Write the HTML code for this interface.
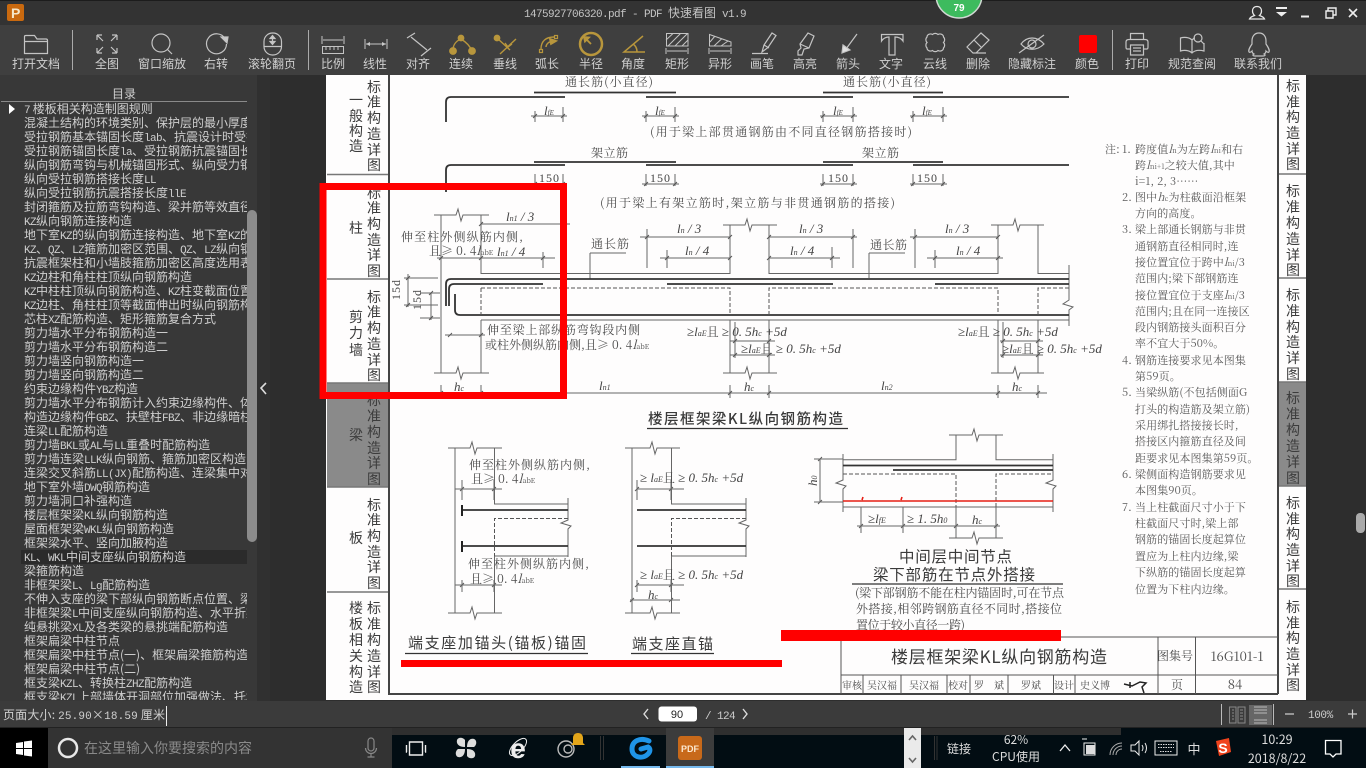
<!DOCTYPE html>
<html lang="zh"><head><meta charset="utf-8"><title>PDF 快速看图</title>
<style>
*{margin:0;padding:0;box-sizing:border-box}
html,body{width:1366px;height:768px;overflow:hidden;background:#2d2d2d;font-family:"Liberation Sans","WenQuanYi Zen Hei",sans-serif}
.a{position:absolute}
#title{left:0;top:0;width:1366px;height:25px;background:#333;border-top:1px solid #1c1c1c}
#tools{left:0;top:25px;width:1366px;height:50px;background:#3f3f3f}
#side{left:0;top:75px;width:257px;height:626px;background:#383838}
#strip{left:257px;top:75px;width:13px;height:626px;background:#303030}
#thumb{left:247px;top:210px;width:10px;height:332px;background:#8c8c8c;border-radius:5px}
#list{left:0;top:102px;width:247px;height:598px;overflow:hidden;color:#cfcfcf;font:12px/14px "WenQuanYi Zen Hei","Noto Sans CJK SC",sans-serif;white-space:nowrap}
#list div{padding-left:24px;height:14px}
#list b{font:11px/14px "Liberation Mono",monospace;letter-spacing:-.6px}
#list .s{background:#2b2b2b;margin-left:21px;padding-left:3px}
#page{left:326px;top:75px;width:980px;height:625px;background:#fefdfd}
#status{left:0;top:701px;width:1366px;height:27px;background:#3b3b3b;border-bottom:1px solid #222}
#task{left:0;top:728px;width:1366px;height:40px;background:#020d13}
</style></head><body>
<div class="a" id="title"></div>
<div class="a" id="tools"></div>
<div class="a" id="side"></div>
<div class="a" id="strip"></div>
<div class="a" id="page"></div>
<div class="a" id="list">
<div style="padding-left:24px"><b>7</b>&nbsp;楼板相关构造制图规则</div>
<div>混凝土结构的环境类别、保护层的最小厚度</div>
<div>受拉钢筋基本锚固长度<b>lab</b>、抗震设计时受拉钢筋</div>
<div>受拉钢筋锚固长度<b>la</b>、受拉钢筋抗震锚固长度</div>
<div>纵向钢筋弯钩与机械锚固形式、纵向受力钢筋</div>
<div>纵向受拉钢筋搭接长度<b>LL</b></div>
<div>纵向受拉钢筋抗震搭接长度<b>llE</b></div>
<div>封闭箍筋及拉筋弯钩构造、梁并筋等效直径</div>
<div><b>KZ</b>纵向钢筋连接构造</div>
<div>地下室<b>KZ</b>的纵向钢筋连接构造、地下室<b>KZ</b>的</div>
<div><b>KZ</b>、<b>QZ</b>、<b>LZ</b>箍筋加密区范围、<b>QZ</b>、<b>LZ</b>纵向钢筋</div>
<div>抗震框架柱和小墙肢箍筋加密区高度选用表</div>
<div><b>KZ</b>边柱和角柱柱顶纵向钢筋构造</div>
<div><b>KZ</b>中柱柱顶纵向钢筋构造、<b>KZ</b>柱变截面位置</div>
<div><b>KZ</b>边柱、角柱柱顶等截面伸出时纵向钢筋构造</div>
<div>芯柱<b>XZ</b>配筋构造、矩形箍筋复合方式</div>
<div>剪力墙水平分布钢筋构造一</div>
<div>剪力墙水平分布钢筋构造二</div>
<div>剪力墙竖向钢筋构造一</div>
<div>剪力墙竖向钢筋构造二</div>
<div>约束边缘构件<b>YBZ</b>构造</div>
<div>剪力墙水平分布钢筋计入约束边缘构件、体积</div>
<div>构造边缘构件<b>GBZ</b>、扶壁柱<b>FBZ</b>、非边缘暗柱</div>
<div>连梁<b>LL</b>配筋构造</div>
<div>剪力墙<b>BKL</b>或<b>AL</b>与<b>LL</b>重叠时配筋构造</div>
<div>剪力墙连梁<b>LLK</b>纵向钢筋、箍筋加密区构造</div>
<div>连梁交叉斜筋<b>LL(JX)</b>配筋构造、连梁集中对角</div>
<div>地下室外墙<b>DWQ</b>钢筋构造</div>
<div>剪力墙洞口补强构造</div>
<div>楼层框架梁<b>KL</b>纵向钢筋构造</div>
<div>屋面框架梁<b>WKL</b>纵向钢筋构造</div>
<div>框架梁水平、竖向加腋构造</div>
<div class="s"><b>KL</b>、<b>WKL</b>中间支座纵向钢筋构造</div>
<div>梁箍筋构造</div>
<div>非框架梁<b>L</b>、<b>Lg</b>配筋构造</div>
<div>不伸入支座的梁下部纵向钢筋断点位置、梁</div>
<div>非框架梁<b>L</b>中间支座纵向钢筋构造、水平折梁</div>
<div>纯悬挑梁<b>XL</b>及各类梁的悬挑端配筋构造</div>
<div>框架扁梁中柱节点</div>
<div>框架扁梁中柱节点(一)、框架扁梁箍筋构造</div>
<div>框架扁梁中柱节点(二)</div>
<div>框支梁<b>KZL</b>、转换柱<b>ZHZ</b>配筋构造</div>
<div>框支梁<b>KZL</b>上部墙体开洞部位加强做法、托墙</div>
</div>
<div class="a" id="thumb"></div>
<div class="a" id="status"></div>
<div class="a" id="task"></div>

<!-- Document -->
<svg class="a" style="left:0;top:0" width="1366" height="768" viewBox="0 0 1366 768">
<style>
.t{font-family:"Noto Serif CJK SC","Liberation Serif",serif;font-size:12px;fill:#4c4c4c;font-style:normal}
.h{font-family:"Noto Sans CJK SC","Liberation Sans",sans-serif;fill:#3a3a3a}
.n{font-family:"Noto Serif CJK SC","Liberation Serif",serif;font-size:11px;fill:#5a5a5a;letter-spacing:.1px}
.n .v{font-style:italic}
.n .s{font-size:7px}
.m{font-family:"Liberation Serif",serif;font-size:12px;fill:#444;letter-spacing:1px}
.i{font-family:"Liberation Serif",serif;font-style:italic;font-size:13px;fill:#444}
.l{fill:none;stroke:#666;stroke-width:1}
.b{fill:none;stroke:#333;stroke-width:1.8}
.d{fill:none;stroke:#555;stroke-width:1;stroke-dasharray:4 2}
.c{font-family:"Noto Sans CJK SC",sans-serif;font-size:14px;fill:#3c3c3c;text-anchor:middle}
</style>
<g style="filter:blur(.35px)">
<!-- left tabs -->
<rect x="327" y="383" width="61" height="104" fill="#8a8a8a"/>
<rect x="1279" y="382" width="27" height="104" fill="#8a8a8a"/>
<path d="M327 174.500H388M327 279H388M327 383H388M327 487H388M327 592H388M1279 174H1306M1279 278H1306M1279 382H1306M1279 486H1306M1279 589H1306" stroke="#777" stroke-width="1.500"/>
<path d="M389 75V694H1278M1278 75V694" fill="none" stroke="#444" stroke-width="2"/>
<g class="c">
<text x="374" y="92">标</text><text x="374" y="107">准</text><text x="374" y="123">构</text><text x="374" y="139">造</text><text x="374" y="155">详</text><text x="374" y="170">图</text>
<text x="356" y="105">一</text><text x="356" y="121">般</text><text x="356" y="136">构</text><text x="356" y="151">造</text>
<text x="374" y="198">标</text><text x="374" y="213">准</text><text x="374" y="229">构</text><text x="374" y="245">造</text><text x="374" y="260">详</text><text x="374" y="276">图</text>
<text x="356" y="233">柱</text>
<text x="374" y="302">标</text><text x="374" y="317">准</text><text x="374" y="333">构</text><text x="374" y="349">造</text><text x="374" y="365">详</text><text x="374" y="380">图</text>
<text x="356" y="322">剪</text><text x="356" y="338">力</text><text x="356" y="355">墙</text>
<text x="374" y="405">标</text><text x="374" y="421">准</text><text x="374" y="437">构</text><text x="374" y="453">造</text><text x="374" y="468">详</text><text x="374" y="484">图</text>
<text x="356" y="440">梁</text>
<text x="374" y="510">标</text><text x="374" y="525">准</text><text x="374" y="541">构</text><text x="374" y="557">造</text><text x="374" y="572">详</text><text x="374" y="588">图</text>
<text x="356" y="543">板</text>
<text x="374" y="613">标</text><text x="374" y="629">准</text><text x="374" y="645">构</text><text x="374" y="661">造</text><text x="374" y="677">详</text><text x="374" y="692">图</text>
<text x="356" y="613">楼</text><text x="356" y="629">板</text><text x="356" y="645">相</text><text x="356" y="661">关</text><text x="356" y="677">构</text><text x="356" y="692">造</text>
<text x="1293" y="91">标</text><text x="1293" y="107">准</text><text x="1293" y="122">构</text><text x="1293" y="138">造</text><text x="1293" y="154">详</text><text x="1293" y="169">图</text>
<text x="1293" y="196">标</text><text x="1293" y="212">准</text><text x="1293" y="228">构</text><text x="1293" y="244">造</text><text x="1293" y="260">详</text><text x="1293" y="275">图</text>
<text x="1293" y="300">标</text><text x="1293" y="316">准</text><text x="1293" y="332">构</text><text x="1293" y="347">造</text><text x="1293" y="363">详</text><text x="1293" y="379">图</text>
<text x="1293" y="403">标</text><text x="1293" y="419">准</text><text x="1293" y="435">构</text><text x="1293" y="451">造</text><text x="1293" y="467">详</text><text x="1293" y="483">图</text>
<text x="1293" y="508">标</text><text x="1293" y="524">准</text><text x="1293" y="539">构</text><text x="1293" y="555">造</text><text x="1293" y="571">详</text><text x="1293" y="586">图</text>
<text x="1293" y="612">标</text><text x="1293" y="628">准</text><text x="1293" y="643">构</text><text x="1293" y="659">造</text><text x="1293" y="675">详</text><text x="1293" y="690">图</text>
</g>

<!-- top rows -->
<text class="t" x="565" y="86" textLength="88">通长筋(小直径)</text>
<text class="t" x="843" y="86" textLength="88">通长筋(小直径)</text>
<path class="b" d="M534 92.500H676M823 92.500H943M446 122V102Q446 97 451 97H565M646 97H853M913 97H1069M534 162H676M823 162H943M446 192V170Q446 165 451 165H565M646 165H853M913 165H1069"/>
<path class="l" d="M535 111V122M563 107V122M646 111V122M675 107V122M823 111V122M853 107V122M913 111V122M943 107V122M531 116H567M642 116H679M820 116H857M910 116H947M535 174V186M563 174V186M646 174V186M675 174V186M823 174V186M853 174V186M913 174V186M943 174V186M531 184H567M642 184H679M820 184H857M910 184H947"/>
<g class="i" font-size="12"><text x="544" y="115">l<tspan font-size="7">fE</tspan></text><text x="655" y="115">l<tspan font-size="7">fE</tspan></text><text x="833" y="115">l<tspan font-size="7">fE</tspan></text><text x="922" y="115">l<tspan font-size="7">fE</tspan></text></g>
<text class="t" x="650" y="136" textLength="262">(用于梁上部贯通钢筋由不同直径钢筋搭接时)</text>
<text class="t" x="591" y="157" textLength="37">架立筋</text>
<text class="t" x="862" y="157" textLength="37">架立筋</text>
<g class="m"><text x="539" y="182">150</text><text x="650" y="182">150</text><text x="828" y="182">150</text><text x="917" y="182">150</text></g>
<text class="t" x="600" y="207" textLength="295">(用于梁上有架立筋时,架立筋与非贯通钢筋的搭接)</text>

<!-- elevation -->
<path class="l" d="M434 215H456l2 -6l3 12l2 -6H489M441 215V373M481 215V273.500H730V225M723 225H745l2 -6l3 12l2 -6H777M769 225V273.500H998V225M991 225H1013l2 -6l3 12l2 -6H1044M1038 225V273.500H1069M1069 265V300l-6 4l10 3l-4 3V326M481 320H1069M481 320V373M730 320V373M769 320V373M998 320V373M1038 320V373M434 373H456l2 -6l3 12l2 -6H489M723 373H745l2 -6l3 12l2 -6H777M991 373H1013l2 -6l3 12l2 -6H1044M481 224H570M437 258H555M481 224V262M543 252V268M441 258V262M640 237H730M660 258H730M647 229V268M667 250V268M769 237H857M769 258H840M853 229V268M832 247V268M910 237H998M927 258H1003M915 229V268M935 250V268M590 253H626M590 253V279M869 253H905M869 253V278M404 278H438M404 305H438M408 274V307M420 293H440M420 318H440M431 293V320M445 335H485M441 393H1047M730 385V398M769 385V398M998 385V398M1038 385V398M441 385V398M481 385V398M730 341H775M730 355H775M1000 341H1043M1000 355H1043M735 322V358M1003 322V358"/>
<path class="b" d="M446 306V284Q446 279 451 279H1069M449 306V289Q449 284 454 284H543M667 284H833M935 284H1069M455 294V310Q455 315 460 315H1069" stroke-width="1.600"/>
<path class="d" d="M481 288H730V315M769 315V288H998V315M1038 315V288H1069M481 288V315"/>
<!-- dimension ticks -->
<path fill="none" stroke="#555" stroke-width=".9" d="M533 118l4-4M561 118l4-4M644 118l4-4M673 118l4-4M821 118l4-4M851 118l4-4M911 118l4-4M941 118l4-4M533 186l4-4M561 186l4-4M644 186l4-4M673 186l4-4M821 186l4-4M851 186l4-4M911 186l4-4M941 186l4-4M479 226l4-4M439 260l4-4M479 260l4-4M541 260l4-4M645 239l4-4M728 239l4-4M767 239l4-4M851 239l4-4M913 239l4-4M996 239l4-4M665 260l4-4M728 260l4-4M767 260l4-4M830 260l4-4M933 260l4-4M996 260l4-4M448 337l4-4M479 337l4-4M439 395l4-4M479 395l4-4M728 395l4-4M767 395l4-4M996 395l4-4M1036 395l4-4M733 343l4-4M767 343l4-4M1001 343l4-4M1036 343l4-4M733 357l4-4M767 357l4-4M1001 357l4-4M1036 357l4-4M406 280l4-4M406 307l4-4M429 295l4-4M429 320l4-4M460 491l4-4M492 491l4-4M460 587l4-4M492 587l4-4M635 491l4-4M669 491l4-4M635 587l4-4M669 587l4-4M630 602l4-4M669 602l4-4M859 528l4-4M901 528l4-4M954 528l4-4M994 528l4-4M818 461l4-4M818 504l4-4"/>
<g class="i"><text x="506" y="221">l<tspan font-size="8">n1</tspan> / 3</text><text x="677" y="233">l<tspan font-size="8">n</tspan> / 3</text><text x="685" y="255">l<tspan font-size="8">n</tspan> / 4</text><text x="799" y="233">l<tspan font-size="8">n</tspan> / 3</text><text x="790" y="255">l<tspan font-size="8">n</tspan> / 4</text><text x="945" y="233">l<tspan font-size="8">n</tspan> / 3</text><text x="956" y="255">l<tspan font-size="8">n</tspan> / 4</text><text x="497" y="256">l<tspan font-size="8">n1</tspan> / 4</text><text x="454" y="391">h<tspan font-size="8">c</tspan></text><text x="599" y="390">l<tspan font-size="8">n1</tspan></text><text x="744" y="391">h<tspan font-size="8">c</tspan></text><text x="881" y="390">l<tspan font-size="8">n2</tspan></text><text x="1012" y="391">h<tspan font-size="8">c</tspan></text></g>
<text class="t" x="401" y="241" textLength="122">伸至柱外侧纵筋内侧,</text>
<text class="t" x="429" y="255" font-size="11">且≥ 0. 4<tspan font-style="italic">l</tspan><tspan font-size="7">abE</tspan></text>
<text class="t" x="591" y="248" textLength="38">通长筋</text>
<text class="t" x="870" y="249" textLength="37">通长筋</text>
<text class="m" transform="translate(400 300) rotate(-90)" font-size="11">15d</text>
<text class="m" transform="translate(421 310) rotate(-90)" font-size="11">15d</text>
<text class="t" x="487" y="334" textLength="153">伸至梁上部纵筋弯钩段内侧</text>
<text class="t" x="485" y="349">或柱外侧纵筋内侧,且≥ 0. 4<tspan font-style="italic">l</tspan><tspan font-size="7">abE</tspan></text>
<g class="i" font-size="14">
<text x="687" y="336">≥l<tspan font-size="8">aE</tspan><tspan class="t">且</tspan> ≥ 0. 5h<tspan font-size="8">c</tspan> +5d</text>
<text x="741" y="353">≥l<tspan font-size="8">aE</tspan><tspan class="t">且</tspan> ≥ 0. 5h<tspan font-size="8">c</tspan> +5d</text>
<text x="958" y="336">≥l<tspan font-size="8">aE</tspan><tspan class="t">且</tspan> ≥ 0. 5h<tspan font-size="8">c</tspan> +5d</text>
<text x="1002" y="353">≥l<tspan font-size="8">aE</tspan><tspan class="t">且</tspan> ≥ 0. 5h<tspan font-size="8">c</tspan> +5d</text>
</g>
<text class="h" x="648" y="424" font-size="14.500" font-weight="500" textLength="195">楼层框架梁KL纵向钢筋构造</text>
<path d="M647 428.500H848" stroke="#333" stroke-width="1.200"/>

<!-- lower left -->
<path class="l" d="M448 448H470l2 -6l3 12l2 -6H502M455 448V613M494.500 448V504H568M568 498V520l-7 3l10 3l-3 3V557M494.500 556H568M494.500 556V613M448 613H470l2 -6l3 12l2 -6H502M455 489H502M462 480V500M494 480V500M455 585H502M462 580V592M494 580V592M625 448H650l2 -6l3 12l2 -6H680M632 448V613M671.500 448V504H746M746 498V520l-7 3l10 3l-3 3V557M671.500 556H746M671.500 556V613M625 613H650l2 -6l3 12l2 -6H680M637 489H684M637 480V500M671 480V500M637 585H684M637 580V592M671 580V592M630 600H680"/>
<path class="b" d="M462 510H568M462 546H568M637 510H746M637 546H746"/>
<path d="M462 505V516M462 541V552" stroke="#222" stroke-width="2"/>
<path class="d" d="M568 518.500H494.500V556M746 518.500H671.500V556"/>
<text class="t" x="469" y="469" textLength="121">伸至柱外侧纵筋内侧,</text>
<text class="t" x="471" y="483" font-size="11">且≥ 0. 4<tspan font-style="italic">l</tspan><tspan font-size="7">abE</tspan></text>
<text class="t" x="468" y="568" textLength="121">伸至柱外侧纵筋内侧,</text>
<text class="t" x="470" y="583" font-size="11">且≥ 0. 4<tspan font-style="italic">l</tspan><tspan font-size="7">abE</tspan></text>
<g class="i"><text x="640" y="482">≥ l<tspan font-size="8">aE</tspan><tspan class="t">且</tspan> ≥ 0. 5h<tspan font-size="8">c</tspan> +5d</text><text x="640" y="579">≥ l<tspan font-size="8">aE</tspan><tspan class="t">且</tspan> ≥ 0. 5h<tspan font-size="8">c</tspan> +5d</text><text x="648" y="599">h<tspan font-size="8">c</tspan></text></g>
<text class="h" x="408" y="648" font-size="15" textLength="178">端支座加锚头(锚板)锚固</text>
<text class="h" x="632" y="649" font-size="15" textLength="81">端支座直锚</text>
<path d="M405 653.500H588M631 653.500H714" stroke="#333" stroke-width="1.200"/>

<!-- lower right -->
<path class="l" d="M949 435H972l2 -6l3 12l2 -6H1003M956 435V459.700H843M996 435V459.700H1053M843 454V480l-7 3l10 3l-3 3V512M1053 454V480l-7 3l10 3l-3 3V512M843 507H1053M956 507V538M996 507V538M949 538H972l2 -6l3 12l2 -6H1003M820 459V502M814 459H843M814 502H843M861 507V533M903 507V533M857 526H1000"/>
<path class="b" d="M843 465.500H1053M893 470H1053"/>
<path class="d" d="M843 474H956V507M996 507V474H1053"/>
<path d="M843 501H1053M862 500l1 -3M901 500l1 -3" stroke="#e61e14" stroke-width="1.600" fill="none"/>
<text class="i" transform="translate(817 486) rotate(-90)">h<tspan font-size="8">0</tspan></text>
<g class="i"><text x="868" y="523">≥l<tspan font-size="8">fE</tspan></text><text x="907" y="523">≥ 1. 5h<tspan font-size="8">0</tspan></text><text x="972" y="524">h<tspan font-size="8">c</tspan></text></g>
<text class="h" x="899" y="562" font-size="15.500" textLength="113">中间层中间节点</text>
<text class="h" x="873" y="580" font-size="15.500" textLength="162">梁下部筋在节点外搭接</text>
<path d="M852 584H1063" stroke="#333" stroke-width="1.200"/>
<text class="t" x="855" y="597" font-size="11" textLength="209">(梁下部钢筋不能在柱内锚固时,可在节点</text>
<text class="t" x="856" y="613" font-size="11" textLength="206">外搭接,相邻跨钢筋直径不同时,搭接位</text>
<text class="t" x="856" y="629" font-size="11" textLength="109">置位于较小直径一跨)</text>

<!-- notes -->
<g class="n">
<text y="153"><tspan x="1105">注:</tspan><tspan x="1122">1.</tspan><tspan x="1135">跨度值</tspan><tspan class="v">l</tspan><tspan class="s">n</tspan>为左跨<tspan class="v">l</tspan><tspan class="s">ni</tspan>和右</text>
<text x="1135" y="169">跨<tspan class="v">l</tspan><tspan class="s">ni+1</tspan>之较大值,其中</text>
<text x="1135" y="185">i=1, 2, 3……</text>
<text y="201"><tspan x="1122">2.</tspan><tspan x="1135">图中</tspan><tspan class="v">h</tspan><tspan class="s">c</tspan>为柱截面沿框架</text>
<text x="1135" y="217">方向的高度。</text>
<text y="233"><tspan x="1122">3.</tspan><tspan x="1135">梁上部通长钢筋与非贯</tspan></text>
<text x="1135" y="250">通钢筋直径相同时,连</text>
<text x="1135" y="266">接位置宜位于跨中<tspan class="v">l</tspan><tspan class="s">ni</tspan>/3</text>
<text x="1135" y="282">范围内;梁下部钢筋连</text>
<text x="1135" y="299">接位置宜位于支座<tspan class="v">l</tspan><tspan class="s">ni</tspan>/3</text>
<text x="1135" y="315">范围内;且在同一连接区</text>
<text x="1135" y="331">段内钢筋接头面积百分</text>
<text x="1135" y="347">率不宜大于50%。</text>
<text y="364"><tspan x="1122">4.</tspan><tspan x="1135">钢筋连接要求见本图集</tspan></text>
<text x="1135" y="380">第59页。</text>
<text y="396"><tspan x="1122">5.</tspan><tspan x="1135">当梁纵筋(不包括侧面G</tspan></text>
<text x="1135" y="413">打头的构造筋及架立筋)</text>
<text x="1135" y="429">采用绑扎搭接接长时,</text>
<text x="1135" y="445">搭接区内箍筋直径及间</text>
<text x="1135" y="462">距要求见本图集第59页。</text>
<text y="478"><tspan x="1122">6.</tspan><tspan x="1135">梁侧面构造钢筋要求见</tspan></text>
<text x="1135" y="494">本图集90页。</text>
<text y="511"><tspan x="1122">7.</tspan><tspan x="1135">当上柱截面尺寸小于下</tspan></text>
<text x="1135" y="527">柱截面尺寸时,梁上部</text>
<text x="1135" y="543">钢筋的锚固长度起算位</text>
<text x="1135" y="560">置应为上柱内边缘,梁</text>
<text x="1135" y="576">下纵筋的锚固长度起算</text>
<text x="1135" y="593">位置为下柱内边缘。</text>
</g>

<!-- title block -->
<path d="M841 637V694M841 637H1278M841 675H1278M1158 637V694M1195.500 637V694M863 675V694M901 675V694M947 675V694M970 675V694M1008 675V694M1053.500 675V694M1075 675V694" stroke="#555" stroke-width="1" fill="none"/>
<text class="h" x="891" y="663" font-size="17" textLength="216">楼层框架梁KL纵向钢筋构造</text>
<g class="t" text-anchor="middle">
<text x="1175" y="660">图集号</text><text x="1237" y="661" font-size="13">16G101-1</text>
<g style="font-size:10px"><text x="852" y="689">审核</text><text x="882" y="689">吴汉福</text><text x="924" y="689">吴汉福</text><text x="958" y="689">校对</text><text x="989" y="689">罗　斌</text><text x="1031" y="689">罗斌</text><text x="1064" y="689">设计</text><text x="1095" y="689">史义博</text></g>
<text x="1177" y="689">页</text><text x="1235" y="689" font-size="13">84</text>
</g>
<path d="M1124 684l8 2l8 -4l6 1l-4 4l2 6M1130 682v6" stroke="#222" stroke-width="1.500" fill="none"/>
</g>

<!-- red annotations -->
<path d="M323 186.500H563.500V395.500H323Z" fill="none" stroke="#f00" stroke-width="7"/>
<rect x="401" y="660" width="381" height="7" fill="#f00"/>
<rect x="781" y="630" width="280" height="11" fill="#f00"/>
</svg>

<!-- Chrome -->
<svg class="a" style="left:0;top:0" width="1366" height="768" viewBox="0 0 1366 768">
<style>
.u{font-family:"WenQuanYi Zen Hei","Noto Sans CJK SC",sans-serif;font-size:12px;fill:#d0d0d0}
.tb{text-anchor:middle}
.g{fill:none;stroke:#c4c4c4;stroke-width:1.200}
.y{fill:none;stroke:#b8963c;stroke-width:1.800}
.w{fill:none;stroke:#e8e8e8;stroke-width:1.300}
</style>
<!-- app icon -->
<rect x="7" y="4" width="17" height="17" rx="2" fill="#c9690f"/>
<text x="11" y="18" font-family="Liberation Sans" font-weight="700" font-size="14" fill="#f5e6c8">P</text>
<!-- title -->
<text x="524" y="17" font-family="Liberation Mono" font-size="11" letter-spacing="-.6" fill="#c4c4c4" xml:space="preserve">1475927706320.pdf - PDF <tspan class="u" font-size="12" letter-spacing="0" style="fill:#c4c4c4">快速看图</tspan> v1.9</text>
<!-- badge -->
<circle cx="959" cy="-5" r="23" fill="#3dbb5e" stroke="#cfd8d2" stroke-width="1.500"/>
<text x="959" y="11" text-anchor="middle" font-family="Liberation Sans" font-weight="700" font-size="10" fill="#fff">79</text>
<!-- window controls -->
<path class="w" d="M1257 6.500c-3 0-4.500 2-4.500 4.500 0 2 1 3.500 2 4.500-3 1-4.500 2-5 3.500H1264.500c-.5-1.500-2-2.500-5-3.500 1-1 2-2.500 2-4.500 0-2.500-1.500-4.500-4.500-4.500z"/>
<path d="M1276 8H1287" stroke="#eee" stroke-width="2"/>
<path d="M1276 12H1287L1281.500 16.500Z" fill="#eee"/>
<path d="M1301 16.500H1309" stroke="#eee" stroke-width="2"/>
<path d="M1326 11H1333V18H1326ZM1328 11V8H1336V15H1333" stroke="#eee" stroke-width="1.400" fill="none"/>
<path d="M1349 9L1357 17M1357 9L1349 17" stroke="#eee" stroke-width="1.600"/>

<!-- separators -->
<path d="M72.500 30V70M308.500 30V70M1112.500 30V70" stroke="#aaa"/>
<!-- tool labels -->
<g class="u tb">
<text x="36" y="68">打开文档</text><text x="107" y="68">全图</text><text x="162" y="68">窗口缩放</text><text x="216" y="68">右转</text><text x="272" y="68">滚轮翻页</text><text x="333" y="68">比例</text><text x="375" y="68">线性</text><text x="418" y="68">对齐</text><text x="461" y="68">连续</text><text x="505" y="68">垂线</text><text x="547" y="68">弧长</text><text x="591" y="68">半径</text><text x="633" y="68">角度</text><text x="677" y="68">矩形</text><text x="720" y="68">异形</text><text x="762" y="68">画笔</text><text x="805" y="68">高亮</text><text x="848" y="68">箭头</text><text x="891" y="68">文字</text><text x="935" y="68">云线</text><text x="978" y="68">删除</text><text x="1032" y="68">隐藏标注</text><text x="1087" y="68">颜色</text><text x="1137" y="68">打印</text><text x="1192" y="68">规范查阅</text><text x="1258" y="68">联系我们</text>
</g>
<!-- tool icons -->
<g class="g">
<path d="M24.500 53.500V36.500Q24.500 35.500 26 35.500H34.500L37 39H46Q47.500 39 47.500 40.500V53.500ZM24.500 41.500H47.500"/>
<path d="M97 35L103 41M97 35H102M97 35V40M117 35L111 41M117 35H112M117 35V40M97 53L103 47M97 53H102M97 53V48M117 53L111 47M117 53H112M117 53V48"/>
<circle cx="161" cy="43" r="9"/><path d="M167.500 49.500L172 54"/>
<path d="M225 38.500A10 10 0 1 0 226.500 44"/><path d="M221 37L228 37L227 43Z" fill="#c8c8c8"/>
<rect x="264" y="33" width="17.500" height="22" rx="8.500"/><path d="M264 46.500H281.500M272.500 36V44"/><path d="M270 38.500L272.500 35.500L275 38.500ZM270 41.500L272.500 44.500L275 41.500Z" fill="#c8c8c8"/>
<path d="M322 36V44M344 36V44M323 40H343M322.500 46.500H343.500V53.500H322.500ZM326 46.500V50M330 46.500V50M334 46.500V50M338 46.500V50" stroke-width="1"/>
<path d="M365 39V49M387 39V49M366 44H386" stroke-width="1"/><path d="M366 44L370 42V46ZM386 44L382 42V46Z" fill="#c8c8c8" stroke="none"/>
<path d="M407 38L415 33M421 56L431 48M411 37L427 50"/>
<path d="M666.500 33.500H688V46H666.500ZM666 40L673 33.500M668 46L680.500 33.500M675 46L687.500 33.500M682 46L688 40M666 48V54M688 48V54M667 51H687" stroke-width="1"/>
<path d="M709.500 34.500L731 42V46H709.500ZM710 42L715 36M714 46L722 38.500M721 46L728 41M709 48V54M731 48V54M710 51H730" stroke-width="1"/>
<path d="M752 53.500H768M762 52L764 45L772 33L776 35.500L768 47.500ZM764 45L769 48"/>
<path d="M798 55V51L801 48L800 44L808 33L814 36L809 48L804 49L802 55ZM800 44L809 48"/>
<path d="M857 34L846 49"/><path d="M842 53L843 45L850 50Z" fill="#e0e0e0"/>
<path d="M881.500 34.500H903V41C901 38 898 37 895 37V55H889V37C886 37 883.500 38 881.500 41Z"/>
<path d="M927 37a3.500 3 0 0 1 5.500-2.500a3.500 3 0 0 1 5.500 0a3.500 3 0 0 1 5.500 2.500a3 3.500 0 0 1 0 5.500a3 3.500 0 0 1 0 5.500a3.500 3 0 0 1-5.500 2.500a3.500 3 0 0 1-5.500 0a3.500 3 0 0 1-5.500-2.500a3 3.500 0 0 1 0-5.500a3 3.500 0 0 1 0-5.500Z"/>
<path d="M981 33L989 40L976 53H973L967 47ZM974 40L982 48M976 53H986"/>
<path d="M1021 44C1027 36 1037 36 1044 44C1037 51 1027 51 1021 44Z"/><circle cx="1032" cy="44" r="4"/><path d="M1019 53L1044 35"/>
<path d="M1130.500 39V33.500H1143.500V39M1130 49H1127Q1126 49 1126 47V42Q1126 39.500 1129 39.500H1145Q1148 39.500 1148 42V47Q1148 49 1147 49H1144M1130.500 45H1143.500V55H1130.500ZM1133 48H1141M1133 51H1141"/>
<path d="M1192 40C1189 37 1184 37 1180.500 38V51C1184 50 1189 50 1192 53C1195 50 1200 50 1204 51V43M1192 40V53M1192 40C1193 39 1194 38 1195 38"/><circle cx="1198" cy="38" r="4" /><path d="M1201 41L1204 44"/>
<path d="M1259 33C1254 33 1252 37 1252 41V44C1250 47 1248 50 1249 52C1250 53 1252 51 1252 51C1252 53 1254 54 1254 54C1252 55 1253 56 1255 56H1263C1265 56 1266 55 1264 54C1264 54 1266 53 1266 51C1266 51 1268 53 1269 52C1270 50 1268 47 1266 44V41C1266 37 1264 33 1259 33Z"/>
</g>
<g class="y">
<path d="M453 50C453 45 456 41 461 39M461 39C466 42 470 46 472 51" stroke-width="1.400"/><circle cx="461" cy="38" r="2.500" fill="#b8963c"/><circle cx="453" cy="51" r="3" fill="#b8963c"/><circle cx="472" cy="51" r="3" fill="#b8963c"/>
<circle cx="497" cy="38" r="2.500" fill="#b8963c"/><path d="M497 38L510 50M516 39L500 54M505 43L508 47L512 44" stroke-width="1.400"/>
<rect x="539.500" y="49.500" width="3" height="3" stroke-width="1.200"/><rect x="554.500" y="35.500" width="3" height="3" stroke-width="1.200"/><path d="M541 49C541 41 546 37 554 37M546 47C546 44 549 41.500 552 41.500" stroke-width="1.400"/><path d="M550 39L556 41L551 44Z" fill="#b8963c"/>
<circle cx="591" cy="44" r="11" stroke-width="2.500"/><path d="M591 44L585 38"/><path d="M584 37L589 37.500L585 41.500Z" fill="#b8963c"/>
<path d="M643 36L624 52H645M633 44C636 46 637 49 637 52" stroke-width="1.500"/>
</g>
<rect x="1079" y="35" width="18" height="18" rx="2" fill="#f00"/>

<!-- sidebar header -->
<text class="u tb" x="124" y="98">目录</text>
<path d="M1 101.500H247" stroke="#8a8a8a"/>
<path d="M9 104L15 109L9 114Z" fill="#fff"/>
<path d="M266 383L261 388L266 394" fill="none" stroke="#ddd" stroke-width="1.600"/>
<rect x="1356" y="513" width="9" height="20" rx="4" fill="#aaa"/>

<!-- status bar -->
<text x="3" y="719" class="u" textLength="162">页面大小: <tspan font-family="Liberation Mono" font-size="11">25.90</tspan>×<tspan font-family="Liberation Mono" font-size="11">18.59</tspan> 厘米</text>
<path d="M166.500 706V726" stroke="#eee"/>
<path d="M648 709L644 714L648 719M743 709L747 714L743 719" fill="none" stroke="#ddd" stroke-width="1.400"/>
<rect x="658.500" y="706.500" width="38.500" height="15" rx="3" fill="#fff"/>
<text x="677" y="718" text-anchor="middle" font-family="Liberation Sans" font-size="11" fill="#222">90</text>
<text x="705" y="719" font-family="Liberation Mono" font-size="11" letter-spacing="-.6" fill="#ccc">/ 124</text>
<path d="M1221.500 704V725M1273.500 704V725" stroke="#bbb"/>
<rect x="1249" y="705" width="23" height="20" fill="#666"/>
<path d="M1229.500 707H1236V723H1229.500ZM1238 707H1245V723H1238ZM1232 710H1234M1232 713H1234M1232 716H1234M1232 719H1234M1240 710H1243M1240 713H1243M1240 716H1243M1240 719H1243" fill="none" stroke="#888"/>
<path d="M1254 707H1267M1254 710H1267M1254 713H1267M1254 720H1267M1254 723H1267" stroke="#bbb"/>
<path d="M1285 714H1294M1348 714H1357M1352.500 709.500V718.500" stroke="#ccc" stroke-width="1.200"/>
<text x="1308" y="718" font-family="Liberation Mono" font-size="11" letter-spacing="-.4" fill="#ccc">100%</text>

<!-- taskbar -->
<rect x="0" y="728" width="48" height="40" fill="#000"/>
<rect x="48" y="728" width="344" height="40" fill="#333"/>
<rect x="392" y="728" width="729" height="7" fill="#2f2f2f"/>
<rect x="666" y="728" width="48" height="40" fill="#3c3c3c"/>
<rect x="621" y="766" width="39" height="2" fill="#76b9ed"/>
<rect x="666" y="766" width="48" height="2" fill="#76b9ed"/>
<path d="M16 743L23 742V748H16ZM24 741.500L32 740.500V748H24ZM16 749H23V755L16 754ZM24 749H32V756.500L24 755.500Z" fill="#fff"/>
<circle cx="68" cy="748" r="9" fill="none" stroke="#e8e8e8" stroke-width="2.500"/>
<text x="84" y="753" font-family="WenQuanYi Zen Hei,Noto Sans CJK SC,sans-serif" font-size="14" fill="#8a8a8a">在这里输入你要搜索的内容</text>
<path d="M368 741a3 3 0 0 1 6 0v7a3 3 0 0 1-6 0ZM365.500 748a5.500 5.500 0 0 0 11 0M371 754v2.500M367.500 757H374.500" fill="none" stroke="#888" stroke-width="1.200"/>
<path d="M409.500 742H422.500V755H409.500ZM406.500 745V752H407M425.500 745V752H425" fill="none" stroke="#eee" stroke-width="1.400"/>
<g fill="#ddd"><path d="M465 747C459 747 456 744 457 740C458 737 463 737 465 740Z"/><path d="M467 747C467 741 470 738 474 739C477 740 477 745 474 747Z"/><path d="M467 749C473 749 476 752 475 756C474 759 469 759 467 756Z"/><path d="M465 749C465 755 462 758 458 757C455 756 455 751 458 749Z"/></g>
<text x="518" y="758" text-anchor="middle" font-family="Liberation Sans" font-weight="700" font-size="28" fill="#eee">e</text>
<ellipse cx="518" cy="747" rx="11" ry="5" transform="rotate(-45 518 747)" fill="none" stroke="#eee"/>
<circle cx="566" cy="749" r="8" fill="none" stroke="#bbb" stroke-width="1.400"/><circle cx="568" cy="749" r="4" fill="none" stroke="#bbb" stroke-width="1.400"/>
<path d="M573 743V738C573 735 575 733 578 733C581 733 583 735 583 738V743L585 745H571Z" fill="#e3a51a"/>
<path d="M600.500 736V760M603.500 736V760" stroke="#333"/>
<path d="M649 741C640 737 632 741 632 749C632 757 642 760 648 754C651 751 650 748 648 747L641 749" fill="none" stroke="#1f94e8" stroke-width="5" stroke-linecap="round"/>
<rect x="678" y="736" width="24" height="24" rx="3" fill="#c8691a"/>
<text x="690" y="752" text-anchor="middle" font-family="Liberation Sans" font-weight="700" font-size="9" fill="#fde9d0">PDF</text>
<rect x="904" y="728" width="17" height="40" fill="#eaeaea"/>
<path d="M909 740L912.500 736L916 740M909 758L912.500 762L916 758" fill="none" stroke="#666" stroke-width="1.600"/>
<path d="M934.500 736V760M937 736V760" stroke="#333"/>
<g font-family="WenQuanYi Zen Hei,Noto Sans CJK SC,sans-serif" font-size="12" fill="#ddd" text-anchor="middle">
<text x="959" y="753">链接</text>
<text x="1016" y="744">62%</text>
<text x="1016" y="761">CPU使用</text>
<text x="1194" y="754" font-size="13">中</text>
<text x="1277" y="744" font-size="12.500">10:29</text>
<text x="1277" y="763" font-size="12.500">2018/8/22</text>
</g>
<path d="M1060 751L1065 745L1070 751" fill="none" stroke="#eee" stroke-width="1.300"/>
<path d="M1084 743H1095V755H1084ZM1082 739H1087" fill="none" stroke="#eee"/><rect x="1086" y="745" width="9" height="9" fill="#ddd"/>
<path d="M1110 755A12 12 0 0 1 1122 743M1113 755A9 9 0 0 1 1122 746M1116 755A6 6 0 0 1 1122 749" fill="none" stroke="#aaa"/>
<path d="M1131 745H1135L1139 741V755L1135 751H1131ZM1142 745Q1144 748 1142 751M1145 743Q1148 748 1145 753" fill="none" stroke="#eee"/>
<rect x="1155" y="741" width="22" height="14" fill="none" stroke="#eee"/>
<path d="M1158 744.500H1174M1158 747.500H1174M1160 751.500H1172" stroke="#ddd" stroke-dasharray="1.500 1"/>
<path d="M1216 741L1229 738L1231 752L1219 756Z" fill="#f0431c"/>
<text x="1223" y="753" text-anchor="middle" font-family="Liberation Sans" font-weight="700" font-size="14" fill="#fff">S</text>
<path d="M1325.500 740.500H1341V754H1336L1333 757L1330 754H1325.500Z" fill="none" stroke="#fff" stroke-width="1.300"/>
</svg>
</body></html>
